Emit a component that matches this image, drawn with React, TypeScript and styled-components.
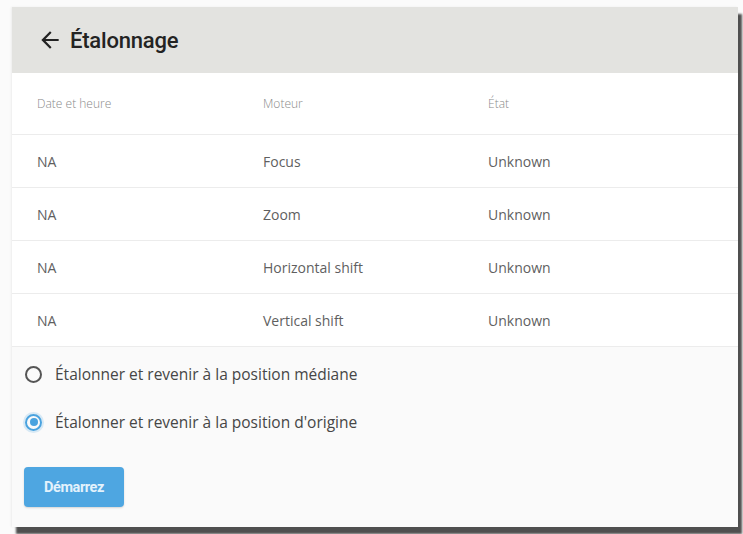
import React, { useState } from 'react'
import styled, { createGlobalStyle } from 'styled-components'

const GlobalStyle = createGlobalStyle`
  html, body {
    margin: 0;
    padding: 0;
    background: #fbfbfb;
    font-family: "Open Sans", Roboto, "Liberation Sans", Arial, sans-serif;
  }
`

const Page = styled.div`
  padding: 7px 0 0 12px;
  height: 534px;
  box-sizing: border-box;
  overflow: hidden;
`

const Card = styled.div`
  width: 726px;
  height: 520px;
  background: #fafafa;
  box-shadow: 4px 7px 2px rgba(70, 70, 70, 0.95), -1px 0 2px rgba(0, 0, 0, 0.06);
  display: flex;
  flex-direction: column;
`

const Header = styled.div`
  height: 66px;
  background: #e3e3e0;
  display: flex;
  align-items: center;
  gap: 7px;
  padding: 0 0 0 25px;
  flex-shrink: 0;
`

const BackArrow = styled.svg`
  width: 26px;
  height: 26px;
  color: #222;
`

const Title = styled.h1`
  margin: 0;
  font-family: Roboto, "Liberation Sans", sans-serif;
  font-size: 22px;
  font-weight: 500;
  color: #232323;
  letter-spacing: -0.2px;
`

const Table = styled.div`
  background: #fff;
  display: flex;
  flex-direction: column;
`

const Row = styled.div<{ $head?: boolean }>`
  display: grid;
  grid-template-columns: 226px 225px 1fr;
  align-items: center;
  height: ${p => (p.$head ? '61px' : '52px')};
  padding-left: 25px;
  border-bottom: 1px solid #ececec;
  font-size: ${p => (p.$head ? '12px' : '14px')};
  font-weight: ${p => (p.$head ? 300 : 400)};
  color: ${p => (p.$head ? '#8a8a8a' : '#5f5f5f')};
`

const Options = styled.div`
  display: flex;
  flex-direction: column;
  gap: 26px;
  padding: 16px 0 0 13px;
`

const Option = styled.label`
  display: flex;
  align-items: center;
  gap: 13px;
  height: 22px;
  font-size: 15.5px;
  color: #464646;
  cursor: pointer;
`

const RadioDot = styled.span<{ $checked?: boolean }>`
  width: 17px;
  height: 17px;
  flex-shrink: 0;
  box-sizing: border-box;
  border-radius: 50%;
  border: 2px solid ${p => (p.$checked ? '#4aa3df' : '#555')};
  display: flex;
  align-items: center;
  justify-content: center;
  box-shadow: ${p => (p.$checked ? '0 0 0 2px rgba(74, 163, 223, 0.2)' : 'none')};

  &::after {
    content: '';
    width: 8px;
    height: 8px;
    border-radius: 50%;
    background: ${p => (p.$checked ? '#4aa3df' : 'transparent')};
  }
`

const StartButton = styled.button`
  margin: 34px 0 0 12px;
  width: 100px;
  height: 40px;
  border: none;
  border-radius: 4px;
  background: #4ea6e1;
  color: #e3f2fc;
  font-family: Roboto, "Liberation Sans", sans-serif;
  font-size: 14.5px;
  font-weight: 700;
  letter-spacing: -0.4px;
  box-shadow: 0 1px 2px rgba(0, 0, 0, 0.15);
  cursor: pointer;
`

const motors = ['Focus', 'Zoom', 'Horizontal shift', 'Vertical shift']

const modes = [
  { id: 'median', label: 'Étalonner et revenir à la position médiane' },
  { id: 'origin', label: "Étalonner et revenir à la position d'origine" },
]

export default function App() {
  const [mode, setMode] = useState('origin')

  return (
    <Page>
      <GlobalStyle />
      <Card>
        <Header>
          <BackArrow viewBox="0 0 24 24" fill="currentColor">
            <path d="M20 11H7.83l5.59-5.59L12 4l-8 8 8 8 1.41-1.41L7.83 13H20v-2z" />
          </BackArrow>
          <Title>Étalonnage</Title>
        </Header>
        <Table>
          <Row $head>
            <span>Date et heure</span>
            <span>Moteur</span>
            <span>État</span>
          </Row>
          {motors.map(m => (
            <Row key={m}>
              <span>NA</span>
              <span>{m}</span>
              <span>Unknown</span>
            </Row>
          ))}
        </Table>
        <Options>
          {modes.map(o => (
            <Option key={o.id} onClick={() => setMode(o.id)}>
              <RadioDot $checked={mode === o.id} />
              {o.label}
            </Option>
          ))}
        </Options>
        <div>
          <StartButton>Démarrez</StartButton>
        </div>
      </Card>
    </Page>
  )
}
